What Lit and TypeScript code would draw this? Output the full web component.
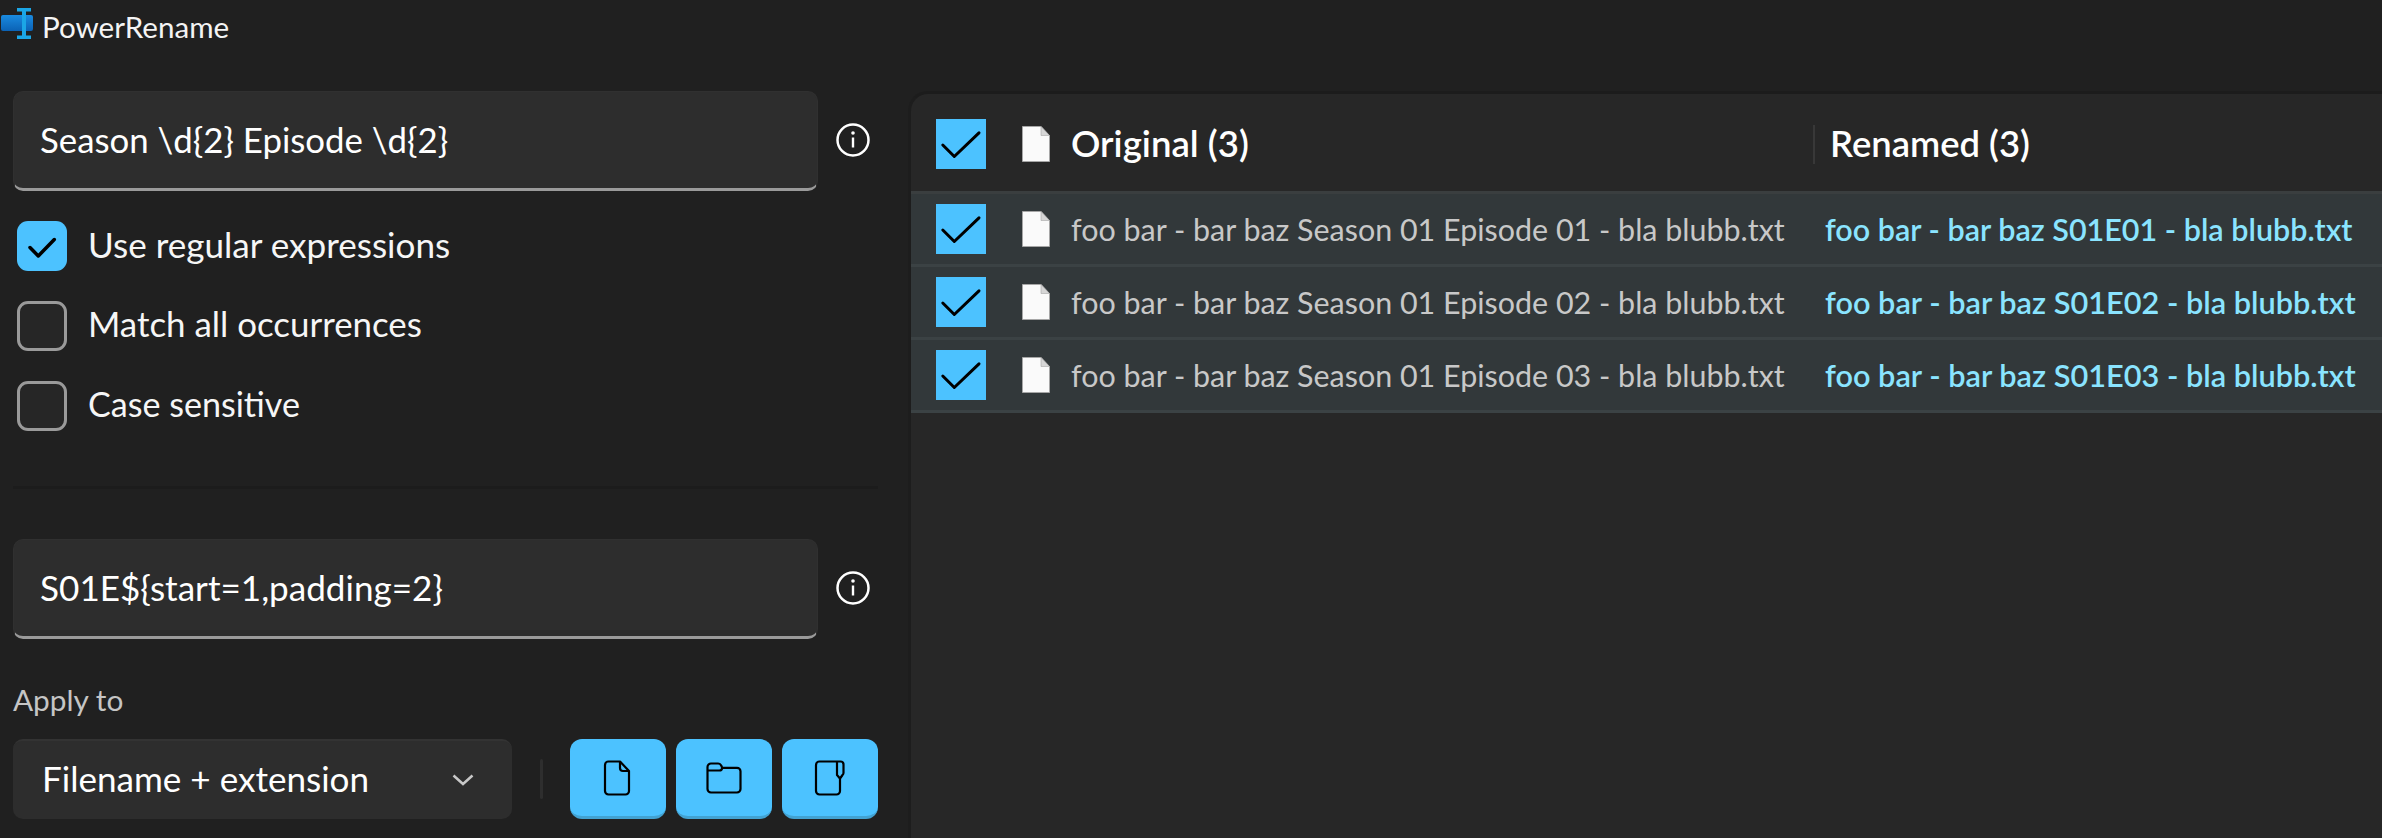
import { LitElement, html, css, svg } from 'lit';
import { customElement } from 'lit/decorators.js';

const rows = [
  { original: 'foo bar - bar baz Season 01 Episode 01 - bla blubb.txt', renamed: 'foo bar - bar baz S01E01 - bla blubb.txt', size: 30.5 },
  { original: 'foo bar - bar baz Season 01 Episode 02 - bla blubb.txt', renamed: 'foo bar - bar baz S01E02 - bla blubb.txt', size: 30.7 },
  { original: 'foo bar - bar baz Season 01 Episode 03 - bla blubb.txt', renamed: 'foo bar - bar baz S01E03 - bla blubb.txt', size: 30.7 },
];

const options = [
  { label: 'Use regular expressions', checked: true, size: 35.1 },
  { label: 'Match all occurrences', checked: false, size: 34.9 },
  { label: 'Case sensitive', checked: false, size: 34.1 },
];

const infoIcon = html`<svg class="info" width="34" height="34" viewBox="0 0 34 34" fill="none" stroke="#fff">
  <circle cx="17" cy="17" r="15.5" stroke-width="2.5"></circle>
  <path d="M17 14.5V24.5" stroke-width="2.4"></path>
  <circle cx="17" cy="10" r="1.8" fill="#fff" stroke="none"></circle>
</svg>`;

const fileIcon = html`<svg class="file" width="28" height="36" viewBox="0 0 28 36">
  <path d="M.5 .5H19L27.5 9.500V35.500H.5Z" fill="#fafafa" stroke="#a6a6a6"></path>
  <path d="M19 .5V9.500H27.500Z" fill="#d6d6d6" stroke="#a6a6a6" stroke-width=".6"></path>
</svg>`;

const squareCheck = html`<span class="square-check"><svg width="50" height="50" viewBox="0 0 50 50" fill="none">
  <path d="M6.800 26L18.300 37.500L43 13.800" stroke="#000" stroke-width="3" stroke-linecap="round" stroke-linejoin="round"></path>
</svg></span>`;

const buttonIcons = [
  svg`<path d="M10.500 3.500H22L31 13V33A3.500 3.500 0 0 1 27.500 36.500H10.500A3.500 3.500 0 0 1 7 33V7A3.500 3.500 0 0 1 10.500 3.500Z"></path>
      <path d="M22 3.500V10A3 3 0 0 0 25 13H31"></path>`,
  svg`<path d="M3.500 9A3.500 3.500 0 0 1 7 5.500H14A3.500 3.500 0 0 1 17.200 7.500L18.200 9.800H33A3.500 3.500 0 0 1 36.500 13.300V31A3.500 3.500 0 0 1 33 34.500H7A3.500 3.500 0 0 1 3.500 31Z"></path>
      <path d="M3.500 12.500H15A3 3 0 0 0 18.200 9.800"></path>`,
  svg`<path d="M9.500 3.500H30.500A3 3 0 0 1 33.500 6.500V15A3 3 0 0 1 32.500 17L30 20.500V33A3.500 3.500 0 0 1 26.500 36.500H9.500A3.500 3.500 0 0 1 6 33V7A3.500 3.500 0 0 1 9.500 3.500Z"></path>
      <path d="M27 3.500V17L30 20.500"></path>`,
];

@customElement('app-root')
export class AppRoot extends LitElement {
  static styles = css`
    :host {
      display: grid;
      grid-template-columns: 908px 1fr;
      grid-template-rows: 91px 747px;
      height: 838px;
      overflow: hidden;
      background: #202020;
      color: #fff;
      font-family: Lato, "Liberation Sans", sans-serif;
    }

    .titlebar {
      grid-column: 1 / -1;
      display: flex;
      align-items: flex-start;
      gap: 8px;
      padding: 7px 0 0 1px;
      font-size: 29.600px;
      line-height: 40px;
      color: #f4f4f4;
    }

    .left {
      display: flex;
      flex-direction: column;
      padding: 0 30px 0 13px;
    }

    .field-row {
      display: flex;
      align-items: center;
      gap: 18px;
    }

    .input {
      box-sizing: border-box;
      width: 805px;
      height: 100px;
      display: flex;
      align-items: center;
      padding: 0 26px 2px;
      background: #2d2d2d;
      border: 1px solid #303030;
      border-bottom: 3px solid #9a9a9a;
      border-radius: 10px;
      font-size: 34.800px;
    }

    .input.replace {
      font-size: 35.100px;
    }

    .info {
      margin-bottom: 3px;
    }

    .options {
      display: flex;
      flex-direction: column;
      gap: 30px;
      margin: 30px 0 0 4px;
    }

    .option {
      display: flex;
      align-items: center;
      gap: 21px;
      height: 50px;
      color: #f6f6f6;
    }

    .option-label {
      padding-bottom: 5px;
    }

    .box {
      box-sizing: border-box;
      width: 50px;
      height: 50px;
      border-radius: 11px;
      border: 3px solid #9a9a9a;
      background: #262626;
    }

    .box.checked {
      border: 0;
      background: #4cc2ff;
    }

    .box svg {
      display: block;
    }

    .divider {
      height: 3px;
      margin: 55px 0 50px;
      background: #1c1c1c;
    }

    .apply-label {
      margin-top: 33px;
      height: 67px;
      line-height: 56px;
      font-size: 29.800px;
      color: #c5c5c5;
    }

    .apply-row {
      display: flex;
      align-items: stretch;
      height: 80px;
    }

    .select {
      box-sizing: border-box;
      width: 499px;
      display: flex;
      align-items: center;
      justify-content: space-between;
      padding: 0 38px 4px 29px;
      background: #2d2d2d;
      border-top: 2px solid #333;
      border-radius: 10px;
      font-size: 35.100px;
    }

    .select svg {
      margin-top: 4px;
    }

    .sep {
      width: 3px;
      height: 40px;
      align-self: center;
      margin: 0 27px 0 28px;
      border-radius: 2px;
      background: #2e2e2e;
    }

    .buttons {
      display: flex;
      gap: 10px;
    }

    .btn {
      box-sizing: border-box;
      width: 96px;
      display: flex;
      align-items: center;
      justify-content: center;
      background: #4cc2ff;
      border-bottom: 3px solid #42a2d2;
      border-radius: 12px;
    }

    .btn svg {
      fill: none;
      stroke: #000;
      stroke-width: 2.200;
      stroke-linejoin: round;
    }

    .panel {
      box-sizing: border-box;
      height: 747px;
      background: #272727;
      border-top: 3px solid #1c1c1c;
      border-left: 3px solid #1d1d1d;
      border-top-left-radius: 20px;
    }

    .head {
      display: grid;
      grid-template-columns: 86px 49px 742px 2px 1fr;
      align-items: center;
      box-sizing: border-box;
      height: 97px;
      padding: 3px 0 0 25px;
      font-weight: 600;
    }

    .head-label {
      font-size: 36.600px;
      padding-bottom: 3px;
    }

    .col-rule {
      width: 2px;
      height: 39px;
      background: #383838;
    }

    .head .renamed-head {
      font-size: 36.400px;
      padding-left: 15px;
    }

    .row {
      display: grid;
      grid-template-columns: 86px 49px 754px 1fr;
      align-items: center;
      box-sizing: border-box;
      height: 73px;
      padding: 0 0 0 25px;
      background: #32383a;
      border-bottom: 3px solid #3b4244;
    }

    .row.first {
      height: 76px;
      border-top: 3px solid #3a3e3f;
    }

    .square-check {
      display: block;
      width: 50px;
      height: 50px;
      background: #4cc2ff;
    }

    .square-check svg,
    .file {
      display: block;
    }

    .original {
      font-size: 30.450px;
      color: #c8c8c8;
    }

    .renamed {
      font-weight: 600;
      color: #8ae4ff;
    }
  `;

  render() {
    return html`
      <div class="titlebar">
        <svg width="33" height="33" viewBox="0 0 33 33">
          <defs>
            <linearGradient id="blue" x1="0" y1="0" x2="0" y2="1">
              <stop offset="0" stop-color="#1a8be0"></stop>
              <stop offset="1" stop-color="#0b62b5"></stop>
            </linearGradient>
          </defs>
          <rect x="0" y="8" width="32" height="16" rx="2" fill="url(#blue)"></rect>
          <path d="M16 1H30V4.500H25V28.500H30V32H16V28.500H21V4.500H16Z" fill="#1ba6e6"></path>
        </svg>
        <span>PowerRename</span>
      </div>

      <div class="left">
        <div class="field-row">
          <div class="input">Season \\d{2} Episode \\d{2}</div>
          ${infoIcon}
        </div>

        <div class="options">
          ${options.map(
            (o) => html`
              <div class="option">
                <span class="box ${o.checked ? 'checked' : ''}">
                  ${o.checked
                    ? html`<svg width="50" height="50" viewBox="0 0 50 50" fill="none">
                        <path d="M13 26.500L21.300 35L37.300 18.500" stroke="#000" stroke-width="3.500" stroke-linecap="round" stroke-linejoin="round"></path>
                      </svg>`
                    : ''}
                </span>
                <span class="option-label" style="font-size: ${o.size}px">${o.label}</span>
              </div>
            `
          )}
        </div>

        <div class="divider"></div>

        <div class="field-row">
          <div class="input replace">S01E\${start=1,padding=2}</div>
          ${infoIcon}
        </div>

        <div class="apply-label">Apply to</div>
        <div class="apply-row">
          <div class="select">
            <span>Filename + extension</span>
            <svg width="22" height="12" viewBox="0 0 22 12" fill="none">
              <path d="M1.500 1.500L11 10L20.500 1.500" stroke="#c8c8c8" stroke-width="2.500"></path>
            </svg>
          </div>
          <div class="sep"></div>
          <div class="buttons">
            ${buttonIcons.map(
              (icon) => html`<div class="btn"><svg width="40" height="40" viewBox="0 0 40 40">${icon}</svg></div>`
            )}
          </div>
        </div>
      </div>

      <div class="panel">
        <div class="head">
          ${squareCheck} ${fileIcon}
          <span class="head-label">Original (3)</span>
          <span class="col-rule"></span>
          <span class="head-label renamed-head">Renamed (3)</span>
        </div>
        ${rows.map(
          (r, i) => html`
            <div class="row ${i === 0 ? 'first' : ''}">
              ${squareCheck} ${fileIcon}
              <span class="original">${r.original}</span>
              <span class="renamed" style="font-size: ${r.size}px">${r.renamed}</span>
            </div>
          `
        )}
      </div>
    `;
  }
}
